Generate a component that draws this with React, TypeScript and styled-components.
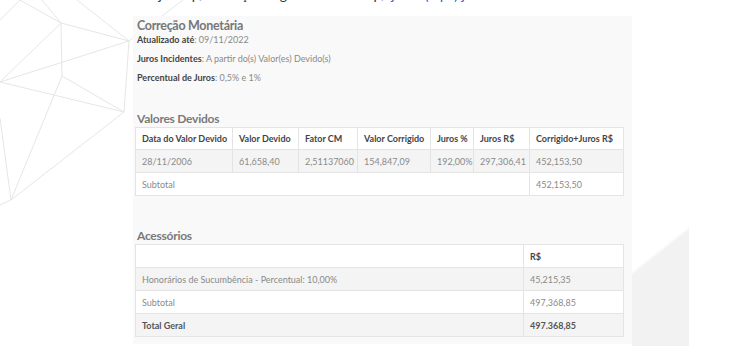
import React from "react";
import styled, { createGlobalStyle } from "styled-components";

const GlobalStyle = createGlobalStyle`
  html, body {
    margin: 0;
    padding: 0;
    background: #ffffff;
    font-family: Lato, Roboto, "Liberation Sans", Arial, sans-serif;
  }
`;

const devidos = [
  {
    data: "28/11/2006",
    valor: "61,658,40",
    fator: "2,51137060",
    corrigido: "154,847,09",
    jurosPct: "192,00%",
    jurosRs: "297,306,41",
    total: "452,153,50",
  },
];

const devidosCols = [97, 66, 59, 73, 43, 56, 94];
const devidosHead = [
  "Data do Valor Devido",
  "Valor Devido",
  "Fator CM",
  "Valor Corrigido",
  "Juros %",
  "Juros R$",
  "Corrigido+Juros R$",
];

const lines: [number, number, number, number][] = [
  [20, 0, 61, 23],
  [42, 0, 61, 23],
  [61, 23, 129, 41],
  [61, 23, 0, 82],
  [0, 82, 129, 41],
  [0, 82, 124, 112],
  [61, 23, 62, 76],
  [62, 76, 124, 112],
  [129, 41, 124, 112],
  [62, 76, 11, 200],
  [124, 112, 11, 200],
  [0, 118, 11, 200],
  [11, 200, 0, 205],
  [77, 0, 129, 41],
  [129, 41, 183, 0],
  [0, 20, 20, 0],
];

export default function App() {
  return (
    <>
      <GlobalStyle />
      <Page>
        <Backdrop width="747" height="346" viewBox="0 0 747 346">
          {lines.map(([x1, y1, x2, y2], i) => (
            <line key={i} x1={x1} y1={y1} x2={x2} y2={y2} />
          ))}
          <polygon className="slab" points="632,273 689,228 689,346 632,346" />
          <line className="edge" x1="632" y1="273" x2="689" y2="228" />
        </Backdrop>

        <Content>
          <IntroClip>
            <IntroText>
              Ajuste p/ correção segundo a tabela p/ <Link>juros (aqui) já</Link>
            </IntroText>
          </IntroClip>

          <Panel>
            <Title>Correção Monetária</Title>
            <Info>
              <strong>Atualizado até</strong>: 09/11/2022
            </Info>
            <Info>
              <strong>Juros Incidentes</strong>: A partir do(s) Valor(es) Devido(s)
            </Info>
            <Info>
              <strong>Percentual de Juros</strong>: 0,5% e 1%
            </Info>

            <SectionTitle $gap={28}>Valores Devidos</SectionTitle>
            <DataTable>
              <colgroup>
                {devidosCols.map((w, i) => (
                  <col key={i} style={{ width: w }} />
                ))}
              </colgroup>
              <thead>
                <Row>
                  {devidosHead.map((h) => (
                    <HeadCell key={h}>{h}</HeadCell>
                  ))}
                </Row>
              </thead>
              <tbody>
                {devidos.map((d) => (
                  <Row key={d.data} $striped>
                    <Cell>{d.data}</Cell>
                    <Cell>{d.valor}</Cell>
                    <Cell>{d.fator}</Cell>
                    <Cell>{d.corrigido}</Cell>
                    <Cell>{d.jurosPct}</Cell>
                    <Cell>{d.jurosRs}</Cell>
                    <Cell>{d.total}</Cell>
                  </Row>
                ))}
                <Row>
                  <Cell colSpan={6}>Subtotal</Cell>
                  <Cell>452,153,50</Cell>
                </Row>
              </tbody>
            </DataTable>

            <SectionTitle $gap={39}>Acessórios</SectionTitle>
            <DataTable>
              <colgroup>
                <col style={{ width: 388 }} />
                <col style={{ width: 100 }} />
              </colgroup>
              <thead>
                <Row>
                  <HeadCell $tall />
                  <HeadCell $tall>R$</HeadCell>
                </Row>
              </thead>
              <tbody>
                <Row $striped>
                  <Cell>Honorários de Sucumbência - Percentual: 10,00%</Cell>
                  <Cell>45,215,35</Cell>
                </Row>
                <Row>
                  <Cell>Subtotal</Cell>
                  <Cell>497,368,85</Cell>
                </Row>
                <Row $striped>
                  <Cell $bold>Total Geral</Cell>
                  <Cell $bold>497.368,85</Cell>
                </Row>
              </tbody>
            </DataTable>
          </Panel>
        </Content>
      </Page>
    </>
  );
}

const Page = styled.div`
  position: relative;
  width: 747px;
  height: 346px;
  overflow: hidden;
  background: #ffffff;
`;

const Backdrop = styled.svg`
  position: absolute;
  left: 0;
  top: 0;
  z-index: 0;

  line {
    stroke: #e6e6e6;
    stroke-width: 1;
  }

  .slab {
    fill: #f2f2f3;
  }

  .edge {
    stroke: #fafafa;
    stroke-width: 2;
  }
`;

const Content = styled.div`
  position: relative;
  z-index: 1;
  margin-left: 133px;
  width: 499px;
`;

const IntroClip = styled.div`
  height: 4px;
  overflow: hidden;
  margin-bottom: 12px;
`;

const IntroText = styled.p`
  margin: -14px 0 0 16px;
  font-size: 14px;
  line-height: 17px;
  color: #333;
  white-space: nowrap;
`;

const Link = styled.span`
  color: #2a5bd7;
`;

const Panel = styled.div`
  background: #f9f9f9;
  padding: 1px 9px 7px 2px;
  display: flex;
  flex-direction: column;
`;

const Title = styled.h2`
  margin: 1px 0 0 2px;
  font-size: 12.5px;
  line-height: 15px;
  letter-spacing: -0.3px;
  font-weight: 700;
  color: #777;
`;

const Info = styled.p`
  margin: 1px 0 6px 2px;
  font-size: 9px;
  line-height: 12px;
  color: #8a8a8a;

  strong {
    color: #444;
    font-weight: 700;
  }
`;

const SectionTitle = styled.h3<{ $gap: number }>`
  margin: ${(p) => p.$gap - 7}px 0 1px 2px;
  font-size: 12px;
  line-height: 15px;
  letter-spacing: -0.25px;
  font-weight: 700;
  color: #7a7a7a;
`;

const DataTable = styled.table`
  width: 488px;
  table-layout: fixed;
  border-collapse: collapse;
  background: #ffffff;
`;

const Row = styled.tr<{ $striped?: boolean }>`
  background: ${(p) => (p.$striped ? "#f4f4f4" : "#ffffff")};
`;

const HeadCell = styled.th<{ $tall?: boolean }>`
  height: ${(p) => (p.$tall ? 22 : 21)}px;
  padding: 0 6px;
  border: 1px solid #e4e4e4;
  text-align: left;
  font-size: 9px;
  font-weight: 700;
  color: #444;
  white-space: nowrap;
  overflow: hidden;
`;

const Cell = styled.td<{ $bold?: boolean }>`
  height: 22px;
  padding: 0 6px;
  border: 1px solid #e4e4e4;
  font-size: 9px;
  font-weight: ${(p) => (p.$bold ? 700 : 400)};
  color: ${(p) => (p.$bold ? "#555" : "#8a8a8a")};
  white-space: nowrap;
  overflow: hidden;
`;
